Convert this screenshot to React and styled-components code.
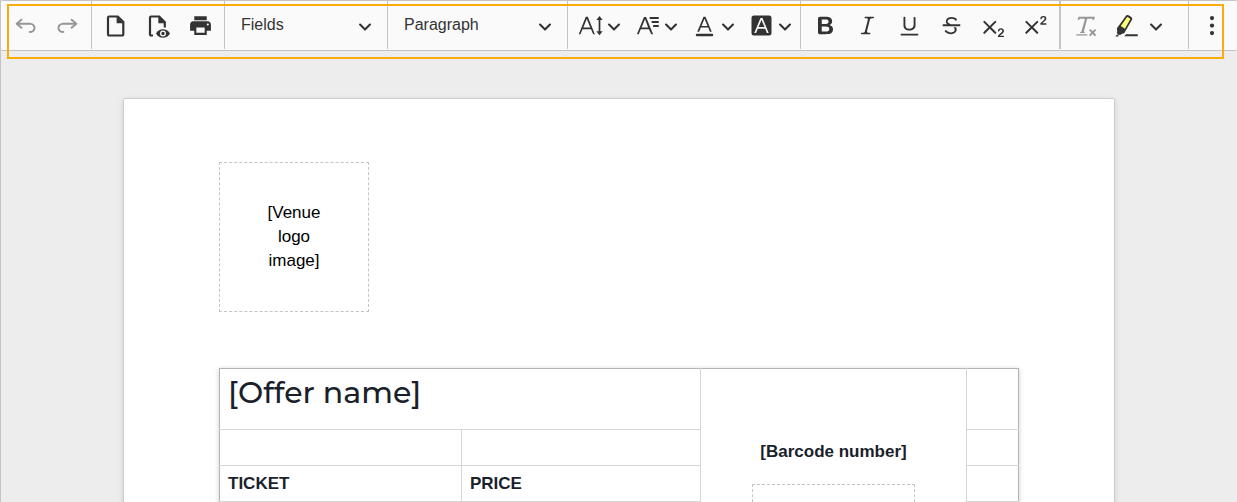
import React from "react";
import styled, { createGlobalStyle } from "styled-components";

const line = "#c4c4c4";
const ink = "#333333";

const GlobalStyle = createGlobalStyle`
  *, *::before, *::after { box-sizing: border-box; }
  body { margin: 0; font-family: "Liberation Sans", Arial, sans-serif; color: #1a1f2b; }
`;

const Editor = styled.main`
  display: flex;
  flex-direction: column;
  height: 100vh;
  border-left: 1px solid ${line};
  background: #ededed;
`;

const Header = styled.header`
  position: relative;
  flex: none;
`;

const Toolbar = styled.div`
  display: flex;
  height: 51px;
  padding: 0 2px 1px 0;
  border-top: 1px solid ${line};
  border-bottom: 1px solid ${line};
  border-radius: 2px;
  background: #fafafa;
  overflow: hidden;
`;

const Highlight = styled.div`
  position: absolute;
  inset: 4px 13px -8px 6px;
  border: 2px solid #faad0a;
  pointer-events: none;
  z-index: 1;
`;

const Group = styled.div`
  display: flex;
  flex: ${(p) => (p.$grow ? "1 0 auto" : "none")};
  padding: 0 ${(p) => (p.$tight ? 2 : 3)}px;
  border-right: ${(p) => p.$rule ?? 1}px solid ${line};
`;

const ToolButton = styled.button`
  display: flex;
  align-items: center;
  justify-content: center;
  gap: ${(p) => (p.$wide ? 10 : 4)}px;
  width: ${(p) => (p.$wide ? 63 : p.$menu ? 57 : 42)}px;
  padding: ${(p) => (p.$menu ? "1px 0 0 2px" : "1px 0 0")};
  border: 0;
  background: none;
  color: ${ink};
  opacity: ${(p) => (p.disabled ? 0.5 : 1)};
`;

const Glyph = styled.svg`
  display: block;
  flex: none;
  width: ${(p) => p.$size ?? 25}px;
  height: ${(p) => p.$size ?? 25}px;
  fill: currentColor;
`;

const Dropdown = styled.label`
  display: grid;
  flex: none;
  align-items: center;
  width: ${(p) => p.$width}px;
  padding: 0 15px 0 16px;
  border-right: 1px solid ${line};
  color: ${ink};

  & > * { grid-area: 1 / 1; }
  & > svg { justify-self: end; margin-top: 2px; pointer-events: none; }
`;

const Select = styled.select`
  appearance: none;
  width: 100%;
  height: 46px;
  padding: 0;
  border: 0;
  background: none;
  color: ${ink};
  font: 16px/24px "Liberation Sans", Arial, sans-serif;
`;

const Canvas = styled.div`
  flex: 1;
  min-height: 0;
  padding: 47px 16px 0;
  overflow: auto;
  scrollbar-width: none;
`;

const Sheet = styled.article`
  max-width: 992px;
  margin: 0 auto;
  padding: 63px 95px;
  border: 1px solid #cccccc;
  border-radius: 2px;
  background: #ffffff;
  box-shadow: 0 2px 6px rgba(0, 0, 0, 0.12);
`;

const Placeholder = styled.div`
  display: flex;
  align-items: center;
  justify-content: center;
  width: ${(p) => p.$width}px;
  height: 150px;
  margin: ${(p) => (p.$centered ? "0 auto" : "0 0 56px")};
  padding: 0 40px;
  border: 1px dashed ${line};
  color: #000000;
  font-size: 17px;
  line-height: 24px;
  text-align: center;
`;

const Ticket = styled.table`
  width: 100%;
  table-layout: fixed;
  border-collapse: collapse;
  border: 1px solid #b3b3b3;
  box-shadow: 0 1px 5px rgba(0, 0, 0, 0.2);
`;

const Row = styled.tr`
  height: ${(p) => (p.$title ? 61 : 36)}px;

  & > td:first-child { border-left: 0; }
  & > td:last-child { border-right: 0; }
  &:first-child > td { border-top: 0; }
`;

const Cell = styled.td`
  padding: 0 8px;
  border: 1px solid #d6d6d6;
  font-size: 17px;
  line-height: 24px;
  font-weight: 700;
  text-align: left;
  vertical-align: middle;
`;

const BarcodeCell = styled(Cell)`
  padding: 71px 8px 24px;
  text-align: center;
  vertical-align: top;
`;

const BarcodeText = styled.p`
  margin: 0 0 20px;
`;

const OfferCell = styled(Cell)`
  padding-top: 4px;
  vertical-align: top;
`;

const OfferName = styled.h1`
  margin: 0;
  font: 500 30px/40px Montserrat, Inter, sans-serif;
`;

const Icon = ({ d, box = 20, size, children }) => (
  <Glyph viewBox={`0 0 ${box} ${box}`} $size={size} aria-hidden="true">
    {d && <path d={d} />}
    {children}
  </Glyph>
);

const Chevron = () => (
  <Icon
    box={10}
    size={14}
    d="M.941 4.523a.75.75 0 1 1 1.06-1.06l3.006 3.005 3.005-3.005a.75.75 0 1 1 1.06 1.06l-3.549 3.55a.75.75 0 0 1-1.168-.136L.941 4.523z"
  />
);

const Tool = ({ label, menu, wide, disabled, children }) => (
  <ToolButton type="button" aria-label={label} $menu={menu} $wide={wide} disabled={disabled}>
    {children}
    {menu && <Chevron />}
  </ToolButton>
);

const undoPath =
  "m5.042 9.367 2.189 1.837a.75.75 0 0 1-.965 1.149l-3.788-3.18a.747.747 0 0 1-.21-.284.75.75 0 0 1 .17-.945L6.23 4.762a.75.75 0 1 1 .964 1.15L4.863 7.866h8.917A.75.75 0 0 1 14 7.9a4 4 0 1 1-1.477 7.718l.344-1.489a2.5 2.5 0 1 0 1.094-4.73l.008-.032H5.042z";
const crossPath =
  "m7.03 10.349 3.818-3.819a.8.8 0 1 1 1.132 1.132L8.16 11.48l3.819 3.818a.8.8 0 1 1-1.132 1.132L7.03 12.61l-3.818 3.82a.8.8 0 1 1-1.132-1.132L5.9 11.48 2.08 7.662A.8.8 0 1 1 3.212 6.53l3.818 3.82z";
const indexPath =
  "M15.177 18.178h2.549c.254 0 .447.05.58.152a.49.49 0 0 1 .201.413.54.54 0 0 1-.159.393c-.105.108-.266.162-.48.162h-3.594c-.245 0-.435-.066-.572-.197a.621.621 0 0 1-.205-.463c0-.114.044-.265.132-.453a1.62 1.62 0 0 1 .288-.444c.433-.436.824-.81 1.172-1.122.348-.312.597-.517.747-.615.267-.183.49-.368.667-.553.177-.185.312-.375.405-.57.093-.194.139-.384.139-.57a1.008 1.008 0 0 0-.554-.917 1.197 1.197 0 0 0-.56-.133c-.426 0-.761.182-1.005.546a2.332 2.332 0 0 0-.164.39 1.609 1.609 0 0 1-.258.488c-.096.114-.237.17-.423.17a.558.558 0 0 1-.405-.156.568.568 0 0 1-.161-.427c0-.218.05-.446.151-.683.101-.238.252-.453.452-.646s.454-.349.762-.467a2.998 2.998 0 0 1 1.081-.178c.498 0 .923.076 1.274.228a1.916 1.916 0 0 1 1.004 1.032 1.984 1.984 0 0 1-.156 1.794c-.2.32-.405.572-.613.754-.208.182-.558.468-1.048.857-.49.39-.826.691-1.008.906a2.703 2.703 0 0 0-.24.309z";

export default function App() {
  return (
    <>
      <GlobalStyle />
      <Editor>
        <Header>
          <Toolbar role="toolbar" aria-label="Editor toolbar">
            <Group>
              <Tool label="Undo" disabled>
                <Icon d={undoPath} />
              </Tool>
              <Tool label="Redo" disabled>
                <Icon>
                  <path d={undoPath} transform="matrix(-1 0 0 1 20 0)" />
                </Icon>
              </Tool>
            </Group>
            <Group>
              <Tool label="New document">
                <Icon box={25}>
                  <path
                    d="M5.2 3.5h8.6l5.5 5.500v12.300a1.200 1.200 0 0 1-1.200 1.200H5.200a1.200 1.200 0 0 1-1.200-1.200V4.700a1.200 1.200 0 0 1 1.200-1.200z"
                    fill="none"
                    stroke="currentColor"
                    strokeWidth="2.200"
                  />
                  <path d="M12.600 3.500v6.800h7z" />
                </Icon>
              </Tool>
              <Tool label="Preview">
                <Icon box={25}>
                  <path
                    d="M18.800 14.500V9.300l-5.600-5.800H5.200a1.200 1.200 0 0 0-1.200 1.200v16.600a1.200 1.200 0 0 0 1.200 1.200h1.800"
                    fill="none"
                    stroke="currentColor"
                    strokeWidth="2.200"
                  />
                  <path d="M12.300 3.500v6.800h7z" />
                  <path
                    fillRule="evenodd"
                    d="M10 20.500c1.600-3 4.200-4.200 7-4.200s5.400 1.200 7 4.200c-1.600 3-4.200 4.300-7 4.300s-5.400-1.300-7-4.300zm7-3a3 3 0 1 0 0 6 3 3 0 0 0 0-6zm0 1.300a1.700 1.700 0 1 1 0 3.400 1.700 1.700 0 0 1 0-3.400z"
                  />
                </Icon>
              </Tool>
              <Tool label="Print">
                <Icon
                  box={24}
                  d="M19 8H5c-1.660 0-3 1.340-3 3v6h4v4h12v-4h4v-6c0-1.660-1.340-3-3-3zm-3 11H8v-5h8v5zm3-7c-.55 0-1-.45-1-1s.45-1 1-1 1 .45 1 1-.45 1-1 1zm-1-9H6v4h12V3z"
                />
              </Tool>
            </Group>
            <Dropdown $width={163}>
              <Select aria-label="Fields">
                <option>Fields</option>
              </Select>
              <Chevron />
            </Dropdown>
            <Dropdown $width={180}>
              <Select aria-label="Heading">
                <option>Paragraph</option>
              </Select>
              <Chevron />
            </Dropdown>
            <Group $tight>
              <Tool label="Font size" menu>
                <Icon d="M9.816 11.500 7.038 4.785 4.261 11.500h5.555zm.62 1.500H3.641l-1.666 4.028H.612l5.589-14h1.675l5.589 14h-1.363L10.436 13z">
                  <path d="M17.200 2.400 19.700 5.600h-1.800v9h1.800l-2.500 3.200-2.500-3.200h1.800v-9h-1.800z" />
                </Icon>
              </Tool>
              <Tool label="Font family" menu>
                <Icon d="M10.500 11.500 8.038 4.985 5.261 11.500zm.62 1.400H4.641l-1.666 4.128H1.512l5.689-13.800h1.675l5.589 13.800h-1.463z">
                  <path
                    d="M11.700 4h7.300M13.300 7.200H19M14.500 10.400H19"
                    fill="none"
                    stroke="currentColor"
                    strokeWidth="1.500"
                  />
                </Icon>
              </Tool>
              <Tool label="Font colour" menu>
                <Icon d="M12.400 10.300 10 4.500l-2.400 5.800h4.800zm.5 1.200H7.100L5.700 15H4.200l5-12h1.600l5 12h-1.500L13 11.500zm3.100 7H4a1 1 0 0 1 0-2h12a1 1 0 0 1 0 2z" />
              </Tool>
              <Tool label="Font background colour" menu>
                <Icon d="M4 2h12a2 2 0 0 1 2 2v12a2 2 0 0 1-2 2H4a2 2 0 0 1-2-2V4a2 2 0 0 1 2-2zm8.380 9.262H7.620L10 5.506l2.380 5.756zm.532 1.285L14.340 16h1.426L10.804 4H9.196L4.234 16H5.660l1.428-3.453h5.824z" />
              </Tool>
            </Group>
            <Group $rule={2}>
              <Tool label="Bold">
                <Icon d="M10.187 17H5.773c-.637 0-1.092-.138-1.364-.415-.273-.277-.409-.718-.409-1.323V4.738c0-.617.14-1.062.419-1.332.279-.27.73-.406 1.354-.406h4.680c.69 0 1.288.041 1.793.124.506.083.96.242 1.360.478.341.197.644.447.906.75a3.262 3.262 0 0 1 .808 2.162c0 1.401-.722 2.426-2.167 3.075C15.050 10.175 16 11.315 16 13.010a3.756 3.756 0 0 1-2.296 3.504 6.100 6.100 0 0 1-1.517.377c-.571.073-1.238.11-2 .11zm-.217-6.217H7v4.087h3.069c1.977 0 2.965-.69 2.965-2.072 0-.707-.256-1.220-.768-1.537-.512-.319-1.277-.478-2.296-.478zM7 5.130v3.619h2.606c.729 0 1.292-.067 1.690-.2a1.600 1.600 0 0 0 .91-.765c.165-.267.247-.566.247-.897 0-.707-.26-1.176-.778-1.409-.519-.232-1.310-.348-2.375-.348H7z" />
              </Tool>
              <Tool label="Italic">
                <Icon d="m9.586 14.633.021.004c-.036.335.095.655.393.962.082.083.173.15.274.201h1.474a.6.6 0 1 1 0 1.200H5.304a.6.6 0 0 1 0-1.200h1.150c.474-.07.809-.182 1.005-.334.157-.122.291-.32.404-.597l2.416-9.550a1.053 1.053 0 0 0-.281-.823 1.120 1.120 0 0 0-.442-.296H8.150a.6.6 0 0 1 0-1.200h6.443a.6.6 0 1 1 0 1.200h-1.195c-.376.056-.65.155-.823.296-.215.175-.423.439-.623.79l-2.366 9.347z" />
              </Tool>
              <Tool label="Underline">
                <Icon d="M3 18v-1.500h14V18zm2.200-8V3.600c0-.4.4-.6.8-.6.3 0 .7.2.7.6v6.200c0 2 1.300 2.800 3.200 2.800 1.900 0 3.400-.9 3.400-2.900V3.600c0-.3.4-.5.8-.5.3 0 .7.2.7.5V10c0 2.700-2.200 4-4.900 4-2.600 0-4.700-1.200-4.700-4z" />
              </Tool>
              <Tool label="Strikethrough">
                <Icon d="M7 16.400c-.8-.4-1.500-.9-2.200-1.500a.6.6 0 0 1-.2-.5l.3-.6h1c1 1.200 2.100 1.700 3.700 1.700 1 0 1.800-.3 2.300-.6.6-.4.6-1.200.6-1.300.2-1.200-.9-2.100-.9-2.100h2.100c.3.7.4 1.200.4 1.700v.8l-.6 1.200c-.6.8-1.100 1-1.600 1.200a6 6 0 0 1-2.400.6c-1 0-1.800-.3-2.500-.6zM6.800 9 6 8.300c-.4-.5-.5-.8-.5-1.600 0-.7.1-1.300.5-1.800.4-.6 1-1 1.600-1.300a6.300 6.300 0 0 1 4.700 0 4 4 0 0 1 1.700 1l.3.7c0 .1.2.4-.2.7-.4.2-.9.1-1 0a3 3 0 0 0-1.200-1c-.4-.2-1-.3-2-.4-.7 0-1.400.2-2 .6-.8.6-1 .8-1 1.500 0 .8.5 1 1.200 1.500.6.4 1.100.7 1.900 1H6.800zM3 10.500V9h14v1.500z" />
              </Tool>
              <Tool label="Subscript">
                <Icon d={crossPath + indexPath} />
              </Tool>
              <Tool label="Superscript">
                <Icon d={crossPath}>
                  <path d={indexPath} transform="translate(0.300 -9.900)" />
                </Icon>
              </Tool>
            </Group>
            <Group $grow>
              <Tool label="Remove format" disabled>
                <Icon d="M8.690 14.915c.053.052.173.083.36.093a.366.366 0 0 1 .345.485l-.003.010a.738.738 0 0 1-.697.497h-2.670a.374.374 0 0 1-.353-.496l.013-.038a.681.681 0 0 1 .644-.458c.197-.012.325-.043.386-.093a.28.28 0 0 0 .072-.11L9.592 4.500H6.269c-.359-.017-.609.013-.75.09-.142.078-.289.265-.442.563-.192.29-.516.464-.864.464H4.170a.43.43 0 0 1-.407-.569L4.460 3h13.080l-.62 2.043a.81.81 0 0 1-.775.574h-.114a.486.486 0 0 1-.486-.486c.001-.284-.054-.464-.167-.54-.112-.076-.367-.106-.766-.091h-3.280l-2.680 10.257c-.006.074.007.127.038.158zM3 17h8a.5.5 0 1 1 0 1H3a.5.5 0 1 1 0-1zm11.299 1.170a.75.75 0 1 1-1.060-1.060l1.414-1.415-1.415-1.414a.75.75 0 0 1 1.060-1.060l1.415 1.414 1.414-1.415a.75.75 0 1 1 1.060 1.060l-1.413 1.415 1.414 1.415a.75.75 0 0 1-1.060 1.060l-1.415-1.414-1.414 1.414z" />
              </Tool>
              <Tool label="Highlight" menu wide>
                <Icon>
                  <path
                    fill="#fdfd77"
                    d="M10.798 1.590 3.002 12.875l1.895 1.852 2.521 1.402 6.997-12.194z"
                  />
                  <path d="m2.556 16.727.234-.348c-.297-.151-.462-.293-.498-.426-.036-.137.002-.416.115-.837.094-.25.15-.449.169-.595a4.495 4.495 0 0 0 0-.725c-.209-.621-.303-1.041-.284-1.260.02-.218.178-.506.475-.862l6.770-9.414c.539-.91 1.605-.85 3.199.18 1.594 1.032 2.188 1.928 1.784 2.686l-5.877 10.360c-.158.412-.333.673-.526.782-.193.108-.604.179-1.232.21-.362.131-.608.237-.738.318-.13.081-.305.238-.526.47-.293.265-.504.397-.632.397-.096 0-.27-.075-.524-.226l-.31.41-1.600-1.120zm-.279.415 1.575 1.103-.392.515H1.190l1.087-1.618zm8.100-13.656-4.953 6.900L8.750 12.570l4.247-7.574c.175-.25-.188-.647-1.092-1.192-.903-.546-1.412-.652-1.528-.32zM8.244 18.500 9.590 17h9.406v1.500H8.245z" />
                </Icon>
              </Tool>
            </Group>
            <Group $tight $rule={0}>
              <Tool label="Show more items">
                <Icon>
                  <circle cx="9.600" cy="4" r="1.700" />
                  <circle cx="9.600" cy="10" r="1.700" />
                  <circle cx="9.600" cy="16" r="1.700" />
                </Icon>
              </Tool>
            </Group>
          </Toolbar>
          <Highlight />
        </Header>
        <Canvas>
          <Sheet>
            <Placeholder $width={150}>[Venue logo image]</Placeholder>
            <Ticket>
              <colgroup>
                <col width="242" />
                <col width="239" />
                <col width="266" />
                <col width="52" />
              </colgroup>
              <tbody>
                <Row $title>
                  <OfferCell colSpan={2}>
                    <OfferName>[Offer name]</OfferName>
                  </OfferCell>
                  <BarcodeCell rowSpan={9}>
                    <BarcodeText>[Barcode number]</BarcodeText>
                    <Placeholder $width={163} $centered />
                  </BarcodeCell>
                  <Cell />
                </Row>
                <Row>
                  <Cell />
                  <Cell />
                  <Cell />
                </Row>
                <Row>
                  <Cell>TICKET</Cell>
                  <Cell>PRICE</Cell>
                  <Cell />
                </Row>
                {[0, 1, 2, 3, 4, 5].map((n) => (
                  <Row key={n}>
                    <Cell />
                    <Cell />
                    <Cell />
                  </Row>
                ))}
              </tbody>
            </Ticket>
          </Sheet>
        </Canvas>
      </Editor>
    </>
  );
}
